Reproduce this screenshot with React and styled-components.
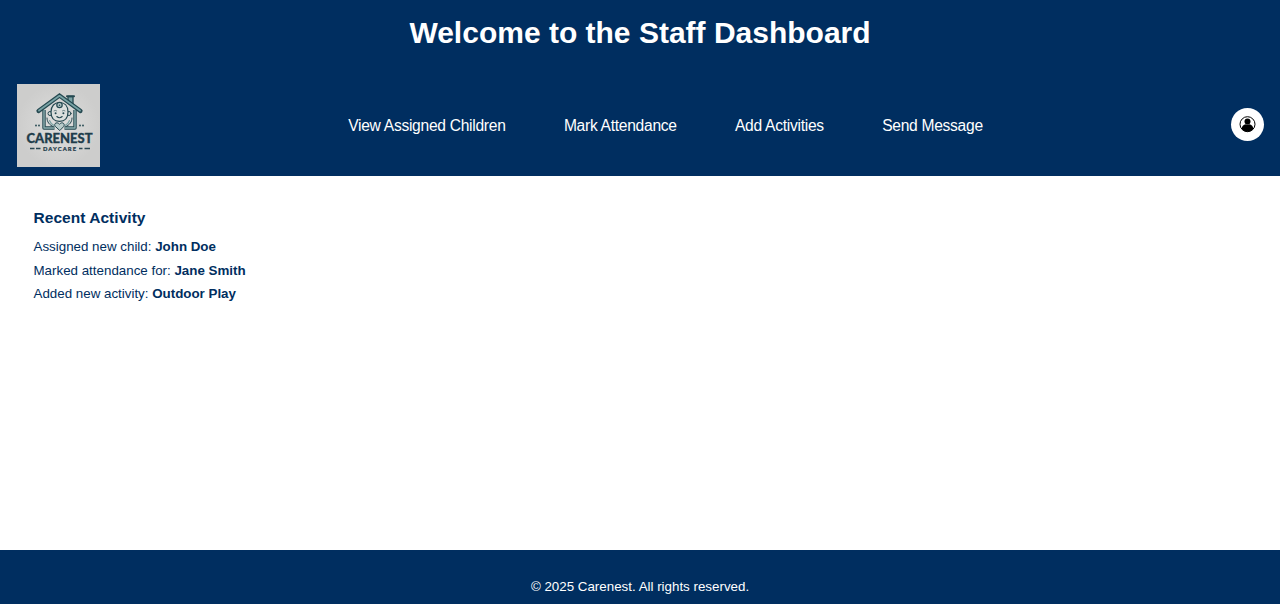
import React from "react";
import styled, { createGlobalStyle } from "styled-components";

const navy = "#002e60";

const GlobalStyle = createGlobalStyle`
  * { box-sizing: border-box; }
  body {
    margin: 0;
    background: #fff;
    font-family: "Liberation Sans", Arial, sans-serif;
    overflow: hidden;
  }
`;

const Page = styled.div`
  display: flex;
  flex-direction: column;
  height: 604px;
`;

const Header = styled.header`
  height: 176px;
  background: ${navy};
  color: #fff;
`;

const Title = styled.h1`
  margin: 0;
  padding-top: 16px;
  height: 84px;
  font-size: 30px;
  line-height: 34px;
  text-align: center;
`;

const Bar = styled.div`
  display: flex;
  align-items: center;
  justify-content: space-between;
  height: 83px;
  padding: 0 16px 0 17px;
`;

const Logo = styled.svg`
  display: block;
  width: 83px;
  height: 83px;
`;

const Nav = styled.nav`
  display: flex;
  gap: 58.3px;
`;

const NavLink = styled.a`
  color: #fff;
  font-size: 15.6px;
  line-height: 20px;
  letter-spacing: -0.28px;
  white-space: nowrap;
`;

const ProfileButton = styled.button`
  display: flex;
  align-items: center;
  justify-content: center;
  width: 33px;
  height: 33px;
  margin-bottom: 3px;
  padding: 0;
  border: 0;
  border-radius: 50%;
  background: #fff;
`;

const Main = styled.main`
  flex: 1;
  padding: 32px 33.5px;
  color: ${navy};
`;

const SectionTitle = styled.h2`
  margin: 0 0 7px;
  font-size: 15.5px;
  line-height: 20px;
  letter-spacing: 0.04px;
`;

const Activity = styled.p`
  margin: 0;
  font-size: 13.35px;
  line-height: 23.7px;
`;

const Footer = styled.footer`
  height: 54px;
  padding-top: 28px;
  background: ${navy};
  color: #fff;
  font-size: 13.35px;
  line-height: 17px;
  text-align: center;
`;

function CarenestLogo() {
  return (
    <Logo viewBox="0 0 83 83" role="img" aria-label="Carenest Daycare">
      <defs>
        <radialGradient id="paper">
          <stop offset="0" stopColor="#dededd" />
          <stop offset="1" stopColor="#cdcdcc" />
        </radialGradient>
      </defs>
      <rect width="83" height="83" fill="url(#paper)" />
      <g stroke="#244850" fill="none" strokeLinejoin="round" strokeLinecap="round">
        <path d="M51 17V12.5h5V22" fill="#7ba3a5" strokeWidth="1.3" />
        <path d="M50 12.2h7" strokeWidth="2" />
        <path d="M37.5 44H27V26M47.5 44H58V26" strokeWidth="3.4" strokeLinecap="butt" />
        <path d="M37.5 44H27V26M47.5 44H58V26" stroke="#8cadae" strokeWidth="1.4" strokeLinecap="butt" />
        <path d="M21.5 27L42.5 11.5L63.5 27" strokeWidth="4.2" strokeLinejoin="miter" />
        <path d="M22 26.6L42.5 11.8L63 26.6" stroke="#79a3a5" strokeWidth="1.8" />
        <path d="M30 34c0 4 2.500 7 6 8.500M55 34c0 4-2.500 7-6 8.500" strokeWidth="1" />
        <path d="M32.500 36.500c.8 2.500 2.500 4 4.500 5M52.500 36.500c-.8 2.500-2.500 4-4.500 5" stroke="#7ba3a5" strokeWidth="1.200" />
        <circle cx="33" cy="29.500" r="2" fill="#d9dcda" strokeWidth="1" />
        <circle cx="52" cy="29.500" r="2" fill="#d9dcda" strokeWidth="1" />
        <path d="M34 28c0-6 3.500-9.500 8.500-9.500S51 22 51 28c0 6.500-3.500 9.300-8.500 9.300S34 34.500 34 28z" fill="#dcdfdd" strokeWidth="1.200" />
        <circle cx="42.500" cy="21" r="2.700" fill="#b3c6c6" strokeWidth="1.200" />
        <circle cx="42.500" cy="21.300" r=".8" fill="#244850" stroke="none" />
        <path d="M37 26.800q1.300-1 2.600 0M45.400 26.800q1.300-1 2.600 0" strokeWidth=".6" />
        <path d="M39.800 32.500q2.700 2.500 5.400 0" strokeWidth="1.100" />
        <path d="M42.500 46.300l-4.300-4c-2-3 2.300-5 4.300-2c2-3 6.300-1 4.300 2z" fill="#b9cccb" strokeWidth="1" />
      </g>
      <g fill="#244850">
        <circle cx="38.600" cy="29.300" r="1" />
        <circle cx="46.400" cy="29.300" r="1" />
        <circle cx="19" cy="41.500" r=".9" />
        <circle cx="22" cy="41.500" r=".9" />
        <circle cx="63" cy="41.500" r=".9" />
        <circle cx="66" cy="41.500" r=".9" />
      </g>
      <text x="9.500" y="58.900" textLength="66" lengthAdjust="spacingAndGlyphs" fontFamily="Lato, sans-serif" fontWeight="900" fontSize="12.200" fill="#1f3d4b" stroke="#1f3d4b" strokeWidth=".3">CARENEST</text>
      <text x="26" y="66.600" textLength="33" fontFamily="Lato, sans-serif" fontWeight="900" fontSize="5.800" fill="#1f3d4b" stroke="#1f3d4b" strokeWidth=".2">DAYCARE</text>
      <path d="M13 64.500h4.500M19 64.500h4.500M62 64.500h3.500M67.500 64.500H73" stroke="#294651" strokeWidth="1.300" />
    </Logo>
  );
}

function ProfileIcon() {
  return (
    <svg width="17" height="17" viewBox="0 0 17 17" aria-hidden="true">
      <circle cx="8.5" cy="8.2" r="7.500" fill="none" stroke="#000" strokeWidth="1" />
      <circle cx="8.500" cy="5.500" r="3" />
      <path d="M2.800 13c0-3 1.500-4.300 4-4.800q1.700.8 3.400 0c2.500.5 4 1.800 4 4.800c-1.300 1.700-3.400 2.700-5.700 2.700s-4.400-1-5.700-2.700z" />
    </svg>
  );
}

const links = ["View Assigned Children", "Mark Attendance", "Add Activities", "Send Message"];

const activities = [
  ["Assigned new child:", "John Doe"],
  ["Marked attendance for:", "Jane Smith"],
  ["Added new activity:", "Outdoor Play"],
];

export default function App() {
  return (
    <Page>
      <GlobalStyle />
      <Header>
        <Title>Welcome to the Staff Dashboard</Title>
        <Bar>
          <CarenestLogo />
          <Nav>
            {links.map((label) => (
              <NavLink key={label}>{label}</NavLink>
            ))}
          </Nav>
          <ProfileButton aria-label="Profile">
            <ProfileIcon />
          </ProfileButton>
        </Bar>
      </Header>
      <Main>
        <SectionTitle>Recent Activity</SectionTitle>
        {activities.map(([label, subject]) => (
          <Activity key={label}>
            {label} <strong>{subject}</strong>
          </Activity>
        ))}
      </Main>
      <Footer>© 2025 Carenest. All rights reserved.</Footer>
    </Page>
  );
}
